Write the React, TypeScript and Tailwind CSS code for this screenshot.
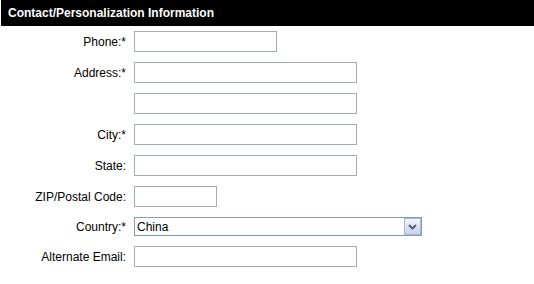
const font = { fontFamily: '"Liberation Sans", Arial, sans-serif' };

type Row = { label: string; width: string };

const rows: Row[] = [
  { label: 'Phone:*', width: 'w-[143px]' },
  { label: 'Address:*', width: 'w-[223px]' },
  { label: '', width: 'w-[223px]' },
  { label: 'City:*', width: 'w-[223px]' },
  { label: 'State:', width: 'w-[223px]' },
  { label: 'ZIP/Postal Code:', width: 'w-[83px]' },
];

function TextBox({ width }: { width: string }) {
  return <div className={`${width} h-[21px] border border-[#a5acb2] bg-white`} />;
}

function FormRow({ label, children }: { label: string; children: React.ReactNode }) {
  return (
    <div className="flex items-center py-[5px]">
      <div className="w-[125px] shrink-0 text-right text-[12px] text-black">{label}</div>
      <div className="ml-[8px]">{children}</div>
    </div>
  );
}

function CountrySelect() {
  return (
    <div className="flex h-[19px] w-[288px] items-center border border-[#7f9db9] bg-white">
      <span className="flex-1 pl-[2px] text-[12px] leading-none text-black">China</span>
      <div className="flex h-[17px] w-[17px] items-center justify-center border border-[#a9b7d6] bg-gradient-to-b from-[#f3f5fb] to-[#cbd2e4]">
        <svg width="9" height="6" viewBox="0 0 9 6">
          <path d="M1 1 L4.5 4.5 L8 1" fill="none" stroke="#4d6185" strokeWidth="2" />
        </svg>
      </div>
    </div>
  );
}

export default function App() {
  return (
    <div className="h-[284px] w-[534px] bg-white pl-[1px]" style={font}>
      <div className="flex h-[26px] items-center bg-black pl-[7px] text-[12px] font-bold text-white">
        Contact/Personalization Information
      </div>
      {rows.map((r, i) => (
        <FormRow key={i} label={r.label}>
          <TextBox width={r.width} />
        </FormRow>
      ))}
      <FormRow label="Country:*">
        <CountrySelect />
      </FormRow>
      <FormRow label="Alternate Email:">
        <TextBox width="w-[223px]" />
      </FormRow>
    </div>
  );
}
